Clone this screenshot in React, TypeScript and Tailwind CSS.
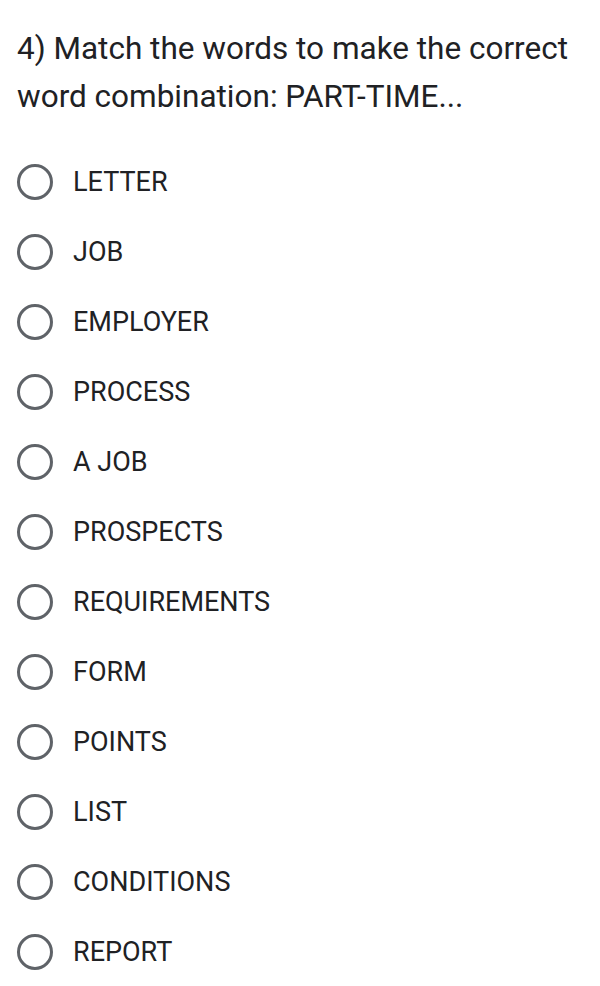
const options = [
  'LETTER',
  'JOB',
  'EMPLOYER',
  'PROCESS',
  'A JOB',
  'PROSPECTS',
  'REQUIREMENTS',
  'FORM',
  'POINTS',
  'LIST',
  'CONDITIONS',
  'REPORT',
]

export default function App() {
  return (
    <div className="w-[600px] h-[986px] bg-white text-[#202124] font-['Roboto',sans-serif] overflow-hidden">
      <h1 className="pl-[17px] pr-2 pt-[25px] text-[31.5px] leading-[48px] font-normal">
        4) Match the words to make the correct word combination: PART-TIME...
      </h1>
      <div className="mt-[26px] flex flex-col">
        {options.map((opt) => (
          <label key={opt} className="flex items-center h-[70px] pl-[17px]">
            <span className="w-[36px] h-[36px] rounded-full border-[3px] border-[#5f6368] shrink-0" />
            <span className="ml-[20px] text-[27px] leading-none">{opt}</span>
          </label>
        ))}
      </div>
    </div>
  )
}
